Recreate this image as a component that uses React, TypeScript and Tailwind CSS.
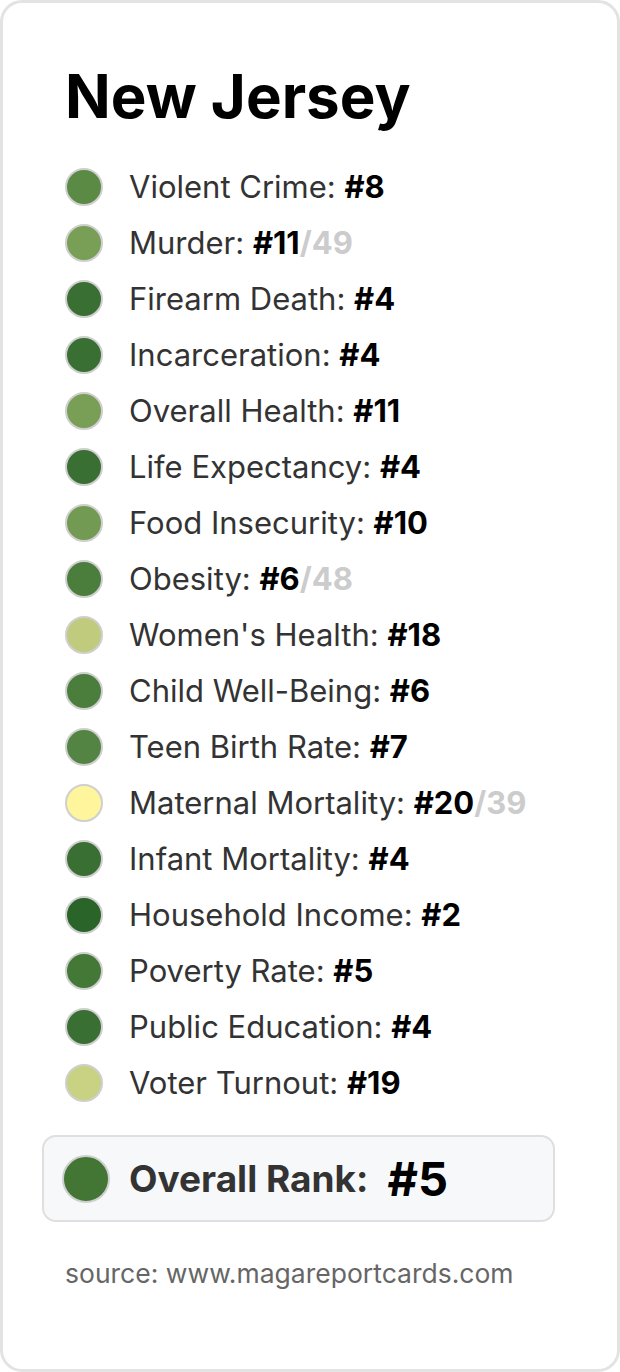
import React from 'react'

type Row = { label: string; rank: number; of?: number; color: string }

const rows: Row[] = [
  { label: 'Violent Crime', rank: 8, color: '#5b8a45' },
  { label: 'Murder', rank: 11, of: 49, color: '#799e56' },
  { label: 'Firearm Death', rank: 4, color: '#3a6f33' },
  { label: 'Incarceration', rank: 4, color: '#3a6f33' },
  { label: 'Overall Health', rank: 11, color: '#799e56' },
  { label: 'Life Expectancy', rank: 4, color: '#3a6f33' },
  { label: 'Food Insecurity', rank: 10, color: '#739a52' },
  { label: 'Obesity', rank: 6, of: 48, color: '#4b7e3c' },
  { label: "Women's Health", rank: 18, color: '#c0cb7d' },
  { label: 'Child Well-Being', rank: 6, color: '#4b7e3c' },
  { label: 'Teen Birth Rate', rank: 7, color: '#548443' },
  { label: 'Maternal Mortality', rank: 20, of: 39, color: '#fff59d' },
  { label: 'Infant Mortality', rank: 4, color: '#3a6f33' },
  { label: 'Household Income', rank: 2, color: '#2a6428' },
  { label: 'Poverty Rate', rank: 5, color: '#437836' },
  { label: 'Public Education', rank: 4, color: '#3a6f33' },
  { label: 'Voter Turnout', rank: 19, color: '#c9d283' },
]

function Dot({ color, big }: { color: string; big?: boolean }) {
  return (
    <span
      className={
        big
          ? 'block w-[48px] h-[48px] rounded-full border-2 border-[#cfcfcf] shrink-0'
          : 'block w-[38px] h-[38px] rounded-full border-2 border-[#cfcfcf] shrink-0'
      }
      style={{ backgroundColor: color }}
    />
  )
}

export default function App() {
  return (
    <div className="bg-white font-['Inter','Liberation_Sans',sans-serif]">
      <div className="min-h-[1372px] border-[3px] border-[#e3e3e3] rounded-[22px] bg-white pl-[62px] pt-[61px]">
        {/* Title */}
        <h1 className="font-bold text-[60px] leading-[64px] text-black">New Jersey</h1>

        {/* Metrics */}
        <ul className="mt-[31px]">
          {rows.map((r) => (
            <li key={r.label} className="flex items-center h-[56px] gap-[26px]">
              <Dot color={r.color} />
              <span className="text-[31px] leading-[36px] text-[#333]">
                {r.label}: <span className="font-bold text-black">#{r.rank}</span>
                {r.of && <span className="font-bold text-[#cccccc]">/{r.of}</span>}
              </span>
            </li>
          ))}
        </ul>

        {/* Overall */}
        <div className="mt-[24px] ml-[-23px] w-[513px] h-[87px] flex items-center gap-[19px] pl-[18px] bg-[#f7f8fa] border-2 border-[#dfdfdf] rounded-[14px]">
          <Dot color="#437634" big />
          <span className="text-[37px] font-bold text-[#333] leading-none">Overall Rank:</span>
          <span className="text-[47px] font-bold text-black leading-none">#5</span>
        </div>

        <p className="mt-[35px] text-[26.5px] leading-[32px] text-[#666]">source: www.magareportcards.com</p>
      </div>
    </div>
  )
}
